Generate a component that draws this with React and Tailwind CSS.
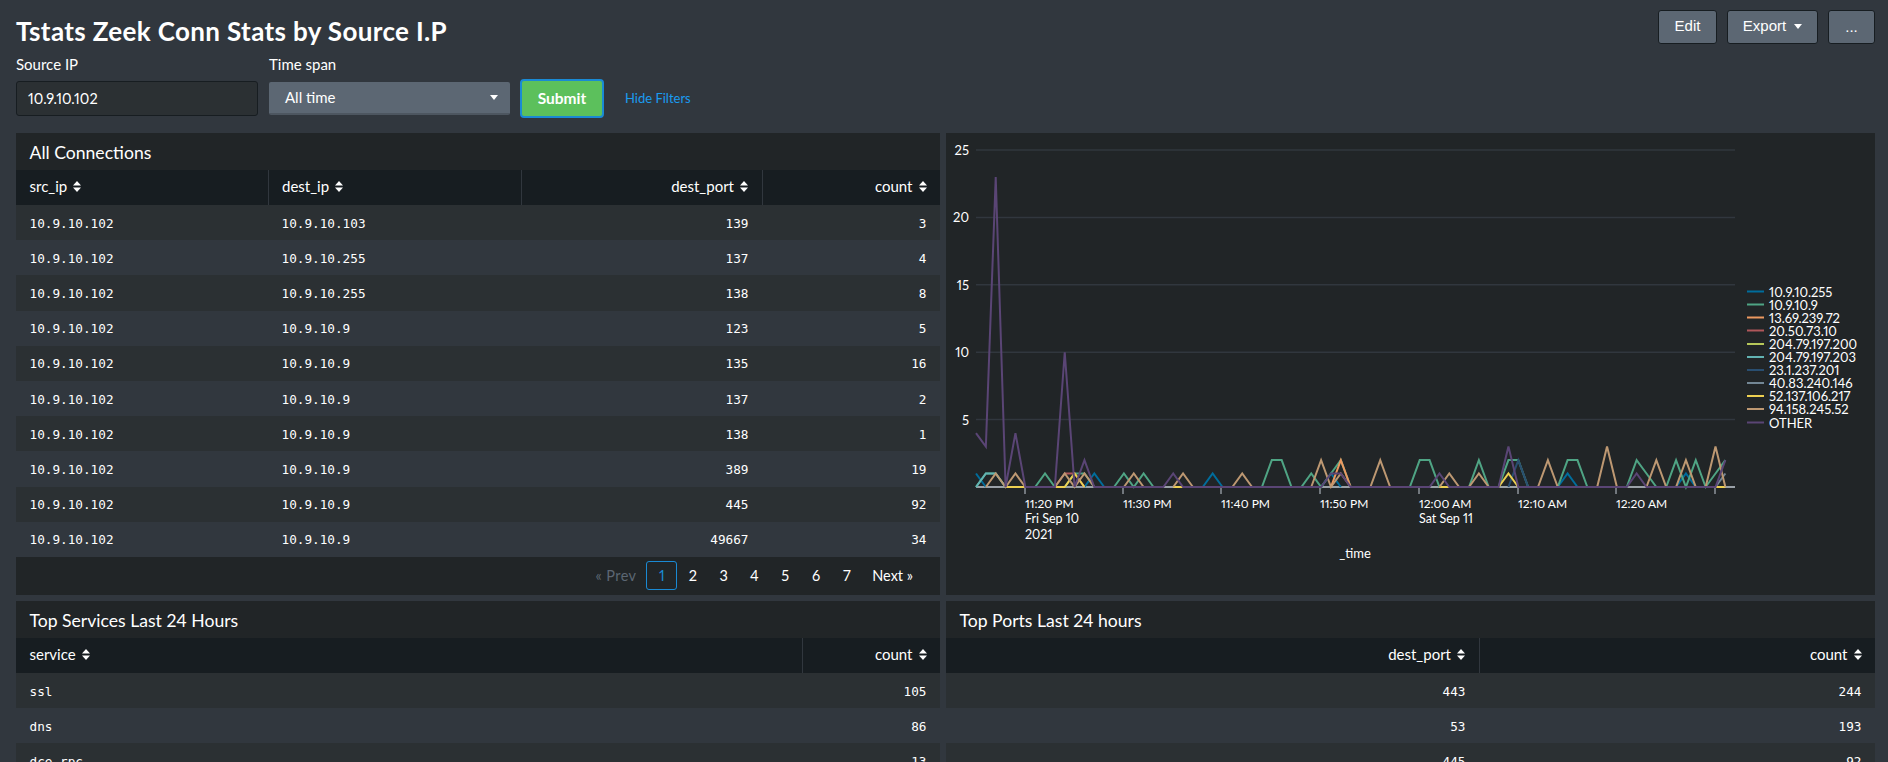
import React from 'react';

const SANS = 'font-["Lato",sans-serif] proportional-nums';
const MONO = 'font-["DejaVu_Sans_Mono",monospace]';

const connections = [
  ['10.9.10.102', '10.9.10.103', '139', '3'],
  ['10.9.10.102', '10.9.10.255', '137', '4'],
  ['10.9.10.102', '10.9.10.255', '138', '8'],
  ['10.9.10.102', '10.9.10.9', '123', '5'],
  ['10.9.10.102', '10.9.10.9', '135', '16'],
  ['10.9.10.102', '10.9.10.9', '137', '2'],
  ['10.9.10.102', '10.9.10.9', '138', '1'],
  ['10.9.10.102', '10.9.10.9', '389', '19'],
  ['10.9.10.102', '10.9.10.9', '445', '92'],
  ['10.9.10.102', '10.9.10.9', '49667', '34'],
];

// minute index -> value, neighbours drop to zero on their own
const series = [
  { name: '10.9.10.255', color: '#006d9c', pts: { 0: 1, 12: 1, 24: 1, 36: 1, 60: 1, 72: 1 } },
  { name: '10.9.10.9', color: '#4fa484', pts: { 1: 1, 2: 1, 7: 1, 10: 1, 11: 1, 15: 1, 17: 1, 30: 2, 31: 2, 34: 1, 36: 1, 37: 2, 45: 2, 46: 2, 51: 2, 54: 2, 55: 2, 60: 2, 61: 2, 67: 2, 68: 1, 71: 2, 73: 2, 75: 1, 76: 2 } },
  { name: '13.69.239.72', color: '#ec9960', pts: { 37: 2 } },
  { name: '20.50.73.10', color: '#af575a', pts: { 9: 1, 10: 1 } },
  { name: '204.79.197.200', color: '#b6c75a', pts: {} },
  { name: '204.79.197.203', color: '#62b3b2', pts: { 1: 1, 2: 1 } },
  { name: '23.1.237.201', color: '#294e70', pts: { 55: 2 } },
  { name: '40.83.240.146', color: '#738795', pts: { 76: 1 } },
  { name: '52.137.106.217', color: '#edd051', pts: { 3: 0, 4: 0, 5: 0, 8: 0, 10: 1, 20: 0, 21: 0, 34: 0, 35: 0, 47: 0, 48: 0, 54: 1, 75: 0, 76: 0 } },
  { name: '94.158.245.52', color: '#bd9872', pts: { 2: 1, 4: 1, 9: 1, 11: 1, 16: 1, 21: 1, 27: 1, 35: 2, 37: 1, 41: 2, 48: 1, 51: 1, 58: 2, 64: 3, 69: 2, 72: 2, 75: 3, 76: 0 } },
];

const other = { 0: 4, 1: 3, 2: 23, 4: 4, 9: 10, 11: 2, 20: 1, 36: 1, 37: 1, 47: 1, 54: 3, 67: 1, 76: 2 };

const legendY = [292, 305, 318, 331, 344.5, 357.5, 370.5, 383.5, 396.5, 409.5, 423];
const ticks = [
  { x: 1025, lines: ['11:20 PM', 'Fri Sep 10', '2021'] },
  { x: 1123, lines: ['11:30 PM'] },
  { x: 1221, lines: ['11:40 PM'] },
  { x: 1320, lines: ['11:50 PM'] },
  { x: 1419, lines: ['12:00 AM', 'Sat Sep 11'] },
  { x: 1518, lines: ['12:10 AM'] },
  { x: 1616, lines: ['12:20 AM'] },
];

// chart coords are page coords minus the panel origin
const OX = 946;
const OY = 133;
const px = (i) => 976 + i * 9.86 - OX;
const py = (v) => 487 - v * 13.48 - OY;

function runs(pts) {
  const keys = Object.keys(pts).map(Number);
  const all = new Set(keys);
  keys.forEach((k) => {
    if (pts[k] > 0) {
      if (k > 0) all.add(k - 1);
      if (k < 76) all.add(k + 1);
    }
  });
  const sorted = [...all].sort((a, b) => a - b);
  const out = [];
  sorted.forEach((k) => {
    const last = out[out.length - 1];
    const point = `${px(k)},${py(pts[k] ?? 0)}`;
    if (last && last.end === k - 1) {
      last.points.push(point);
      last.end = k;
    } else {
      out.push({ end: k, points: [point] });
    }
  });
  return out.map((r) => r.points.join(' '));
}

function SortIcon() {
  return (
    <svg width="8" height="11" viewBox="0 0 8 11" className="inline-block ml-[6px] -mt-[2px] align-middle" fill="#fff">
      <path d="M4 0 L8 4.5 H0 Z" />
      <path d="M0 6.5 H8 L4 11 Z" />
    </svg>
  );
}

function Caret() {
  return (
    <svg width="8" height="5" viewBox="0 0 8 5" fill="#fff">
      <path d="M0 0 H8 L4 5 Z" />
    </svg>
  );
}

function DataTable({ columns, rows }) {
  return (
    <table className="w-full table-fixed border-collapse">
      <colgroup>
        {columns.map((c) => (
          <col key={c.label} style={{ width: c.width }} />
        ))}
      </colgroup>
      <thead>
        <tr className="h-[35px] bg-[#171d21]">
          {columns.map((c, i) => (
            <th
              key={c.label}
              className={`px-[13.5px] pb-[3px] text-[15px] font-normal text-white ${c.right ? 'text-right' : 'text-left'} ${i > 0 ? 'border-l border-[#31373e]' : ''}`}
            >
              {c.label}
              <SortIcon />
            </th>
          ))}
        </tr>
      </thead>
      <tbody>
        {rows.map((row, r) => (
          <tr key={r} className={`h-[35.2px] ${r % 2 === 0 ? 'bg-[#2b3033]' : 'bg-[#31373e]'}`}>
            {row.map((cell, i) => (
              <td
                key={i}
                className={`px-[13.5px] pt-[1px] text-[12.7px] text-white ${MONO} ${columns[i].right ? 'text-right' : 'text-left'}`}
              >
                {cell}
              </td>
            ))}
          </tr>
        ))}
      </tbody>
    </table>
  );
}

function Panel({ title, children, className = '' }) {
  return (
    <div className={`bg-[#212527] ${className}`}>
      {title && (
        <div className="h-[37px] pt-[3px] flex items-center pl-[13.5px] text-[17.6px] text-white">{title}</div>
      )}
      {children}
    </div>
  );
}

function Pagination() {
  return (
    <div className="h-[38px] flex items-center justify-end pr-[27px] text-[14.5px] text-white">
      <span className="mr-[10px] text-[#5c6773] tracking-[0.4px]">« Prev</span>
      <span className="w-[31px] h-[29px] flex items-center justify-center rounded-[3px] border border-[#1a8ad4] text-[#1a8ad4]">
        1
      </span>
      {['2', '3', '4', '5', '6', '7'].map((p) => (
        <span key={p} className="w-[30.8px] text-center">{p}</span>
      ))}
      <span className="ml-[10px]">Next »</span>
    </div>
  );
}

function Chart() {
  return (
    <svg width="929" height="462" viewBox="0 0 929 462" className={`block ${SANS}`}>
      {[25, 20, 15, 10, 5].map((v) => (
        <g key={v}>
          <line x1={976 - OX} x2={1735 - OX} y1={py(v)} y2={py(v)} stroke="#31373e" strokeWidth="1.5" />
          <text x={969 - OX} y={py(v) + 5} textAnchor="end" fill="#fff" fontSize="13">{v}</text>
        </g>
      ))}
      <line x1={976 - OX} x2={1735 - OX} y1={py(0)} y2={py(0)} stroke="#c3cbd4" strokeWidth="1.5" />
      {[...ticks.map((t) => t.x), 1715].map((x) => (
        <line key={x} x1={x - OX} x2={x - OX} y1={py(0)} y2={py(0) + 7} stroke="#c3cbd4" strokeWidth="1" />
      ))}
      {ticks.map((t) =>
        t.lines.map((line, i) => (
          <text key={line} x={t.x - OX} y={507.5 - OY + i * 15.5} fill="#fff" fontSize={i === 0 ? 12 : 12.5}>{line}</text>
        ))
      )}
      <text x={1355 - OX} y={558 - OY} textAnchor="middle" fill="#fff" fontSize="13">_time</text>

      {series.map((s) =>
        runs(s.pts).map((points, i) => (
          <polyline key={s.name + i} points={points} fill="none" stroke={s.color} strokeWidth="2" />
        ))
      )}
      <polyline
        points={Array.from({ length: 77 }, (_, i) => `${px(i)},${py(other[i] ?? 0)}`).join(' ')}
        fill="none"
        stroke="#5a4575"
        strokeWidth="2"
      />

      {[...series, { name: 'OTHER', color: '#5a4575' }].map((s, i) => (
        <g key={s.name}>
          <line x1={1747 - OX} x2={1764 - OX} y1={legendY[i] - 0.5 - OY} y2={legendY[i] - 0.5 - OY} stroke={s.color} strokeWidth="2" />
          <text x={1769 - OX} y={legendY[i] + 4.5 - OY} fill="#fff" fontSize="13">{s.name}</text>
        </g>
      ))}
    </svg>
  );
}

export default function App() {
  return (
    <div className={`h-[762px] overflow-hidden bg-[#31373e] pl-4 pr-[13px] text-white ${SANS}`}>
      <div className="h-[54px] pt-[10px] flex items-start justify-between">
        <h1 className="text-[26px] tracking-[0.36px] leading-[42px] font-bold text-white">Tstats Zeek Conn Stats by Source I.P</h1>
        <div className='flex gap-[10px] font-["Liberation_Sans",sans-serif] text-[15px]'>
          <button className="h-[34px] w-[59px] pb-[2px] rounded-[3px] border border-[#171d21] bg-[#5c6773] text-white">Edit</button>
          <button className="h-[34px] w-[91px] pb-[2px] rounded-[3px] border border-[#171d21] bg-[#5c6773] text-white flex items-center justify-center gap-[8px]">
            Export <Caret />
          </button>
          <button className="h-[34px] w-[47px] rounded-[3px] border border-[#171d21] bg-[#5c6773] text-white">...</button>
        </div>
      </div>

      <div className="h-[79px] flex items-start">
        <div className="w-[253px]">
          <div className="h-[27px] pb-[6px] flex items-center text-[15px]">Source IP</div>
          <div className="w-[242px] h-[35px] flex items-center pl-[11px] rounded-[3px] border border-[#171d21] bg-[#2b3033] text-[14.5px]">
            10.9.10.102
          </div>
        </div>
        <div className="w-[251px]">
          <div className="h-[27px] pb-[6px] flex items-center text-[15px]">Time span</div>
          <div className="w-[241px] h-[33px] mt-[1px] flex items-center justify-between pl-[16px] pr-[12px] rounded-[2px] bg-[#5c6773] border-b-2 border-[#4d5660] text-[15px]">
            All time
            <Caret />
          </div>
        </div>
        <button className="w-[84px] h-[39px] mt-[25px] rounded-[4px] border-2 border-[#1a8ad4] bg-[#5cc05c] text-[15.5px] font-bold text-white">
          Submit
        </button>
        <span className="ml-[21px] mt-[35px] text-[13px] text-[#1a9cf0]">Hide Filters</span>
      </div>

      <div className="grid grid-cols-[924px_929px] gap-[6px]">
        <Panel title="All Connections" className="h-[462px]">
          <DataTable
            columns={[
              { label: 'src_ip', width: 252 },
              { label: 'dest_ip', width: 253 },
              { label: 'dest_port', width: 241, right: true },
              { label: 'count', width: 178, right: true },
            ]}
            rows={connections}
          />
          <Pagination />
        </Panel>
        <Panel className="h-[462px]">
          <Chart />
        </Panel>
        <Panel title="Top Services Last 24 Hours">
          <DataTable
            columns={[
              { label: 'service', width: 786 },
              { label: 'count', width: 138, right: true },
            ]}
            rows={[['ssl', '105'], ['dns', '86'], ['dce_rpc', '13']]}
          />
        </Panel>
        <Panel title="Top Ports Last 24 hours">
          <DataTable
            columns={[
              { label: 'dest_port', width: 533, right: true },
              { label: 'count', width: 396, right: true },
            ]}
            rows={[['443', '244'], ['53', '193'], ['445', '92']]}
          />
        </Panel>
      </div>
    </div>
  );
}
